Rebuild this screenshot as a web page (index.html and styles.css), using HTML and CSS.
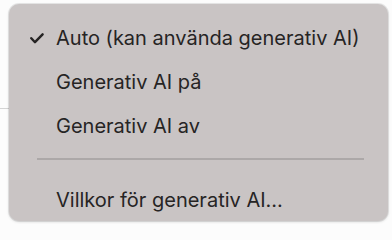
FILE: index.html
```html
<!DOCTYPE html>
<html lang="sv">
<head>
<meta charset="utf-8">
<link rel="stylesheet" href="styles.css">
</head>
<body>
<div class="bg-line"></div>
<div class="menu">
  <div class="item checked">
    <svg class="check" width="14" height="11" viewBox="0 0 14 11"><path d="M1.3 5.2 L5 9.2 L12.6 1.3" fill="none" stroke="#262424" stroke-width="2.4" stroke-linecap="round" stroke-linejoin="round"/></svg>
    <span class="label">Auto (kan använda generativ AI)</span>
  </div>
  <div class="item"><span class="label">Generativ AI på</span></div>
  <div class="item"><span class="label">Generativ AI av</span></div>
  <div class="sep"><div class="sep-line"></div></div>
  <div class="item"><span class="label">Villkor för generativ AI...</span></div>
</div>
</body>
</html>
```
FILE: styles.css
```css
html, body {
  margin: 0;
  padding: 0;
  background: #fcfcfc;
  width: 392px;
  height: 224px;
  overflow: hidden;
}
body {
  position: relative;
  font-family: Inter, "Noto Sans", sans-serif;
}
.bg-line {
  position: absolute;
  left: 0;
  top: 108px;
  width: 10px;
  height: 1px;
  background: #d4d4d4;
}
.menu {
  position: absolute;
  left: 9px;
  top: 4px;
  width: 379px;
  height: 217px;
  box-sizing: border-box;
  padding-top: 12px;
  background: #c9c4c4;
  border-radius: 10px;
  box-shadow: 0 0 0 1px rgba(0,0,0,0.08), 0 1px 3px rgba(0,0,0,0.15);
  overflow: hidden;
}
.item {
  display: flex;
  align-items: center;
  height: 44px;
  padding-left: 47px;
  position: relative;
  color: #262424;
  font-size: 20px;
  font-weight: 400;
  line-height: 44px;
}
.check {
  position: absolute;
  left: 21px;
  top: 17px;
}
.sep {
  height: 30px;
  box-sizing: border-box;
  padding: 10px 24px 0 28px;
}
.sep-line {
  height: 1.5px;
  background: #aca8a8;
}
```
